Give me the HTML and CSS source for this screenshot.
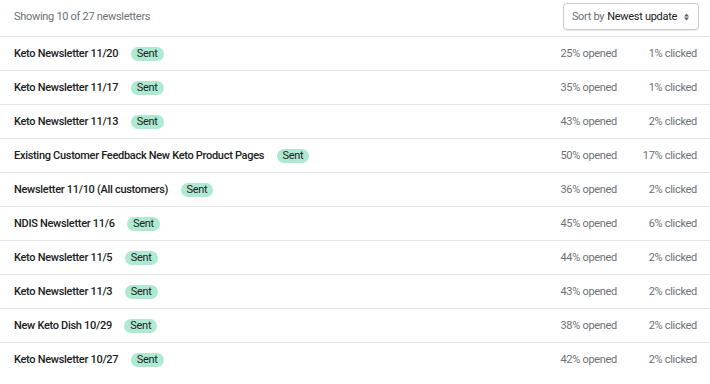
FILE: index.html
```html
<!DOCTYPE html>
<html lang="en">
<head>
    <meta charset="UTF-8">
    <title>Newsletters</title>
    <link rel="stylesheet" href="styles.css">
</head>
<body>
    <div class="list">
        <div class="list-header">
            <span class="count">Showing 10 of 27 newsletters</span>
            <button class="sort-btn">Sort by <span class="sort-value">Newest update</span>
                <svg class="caret" width="7" height="10" viewBox="0 0 7 10"><path d="M3.5 1.5L6 4.5H1z M3.5 8.5L1 5.5h5z" fill="#5c5f62"/></svg>
            </button>
        </div>

        <div class="row">
            <div class="name">Keto Newsletter 11/20 <span class="badge">Sent</span></div>
            <div class="stat">25% opened</div>
            <div class="stat">1% clicked</div>
        </div>
        <div class="row">
            <div class="name">Keto Newsletter 11/17 <span class="badge">Sent</span></div>
            <div class="stat">35% opened</div>
            <div class="stat">1% clicked</div>
        </div>
        <div class="row">
            <div class="name">Keto Newsletter 11/13 <span class="badge">Sent</span></div>
            <div class="stat">43% opened</div>
            <div class="stat">2% clicked</div>
        </div>
        <div class="row">
            <div class="name">Existing Customer Feedback New Keto Product Pages <span class="badge">Sent</span></div>
            <div class="stat">50% opened</div>
            <div class="stat">17% clicked</div>
        </div>
        <div class="row">
            <div class="name">Newsletter 11/10 (All customers) <span class="badge">Sent</span></div>
            <div class="stat">36% opened</div>
            <div class="stat">2% clicked</div>
        </div>
        <div class="row">
            <div class="name">NDIS Newsletter 11/6 <span class="badge">Sent</span></div>
            <div class="stat">45% opened</div>
            <div class="stat">6% clicked</div>
        </div>
        <div class="row">
            <div class="name">Keto Newsletter 11/5 <span class="badge">Sent</span></div>
            <div class="stat">44% opened</div>
            <div class="stat">2% clicked</div>
        </div>
        <div class="row">
            <div class="name">Keto Newsletter 11/3 <span class="badge">Sent</span></div>
            <div class="stat">43% opened</div>
            <div class="stat">2% clicked</div>
        </div>
        <div class="row">
            <div class="name">New Keto Dish 10/29 <span class="badge">Sent</span></div>
            <div class="stat">38% opened</div>
            <div class="stat">2% clicked</div>
        </div>
        <div class="row">
            <div class="name">Keto Newsletter 10/27 <span class="badge">Sent</span></div>
            <div class="stat">42% opened</div>
            <div class="stat">2% clicked</div>
        </div>
    </div>
</body>
</html>
```

FILE: styles.css
```css
body {
    margin: 0;
    background: #fff;
    font-family: Roboto, "Noto Sans", sans-serif;
    font-size: 11px;
    letter-spacing: -0.3px;
    color: #202223;
}

.list {
    width: 710px;
}

.list-header {
    display: flex;
    align-items: center;
    justify-content: space-between;
    height: 33px;
    padding: 0 11px 3px 14px;
    border-bottom: 1px solid #e4e5e7;
}

.count {
    color: #6d7175;
}

.sort-btn {
    display: flex;
    align-items: center;
    gap: 6px;
    height: 27px;
    padding: 0 8px;
    background: #fff;
    border: 1px solid #c9cccf;
    border-radius: 4px;
    box-shadow: 0 1px 1px rgba(0,0,0,0.08);
    font-family: inherit;
    font-size: 11px;
    letter-spacing: -0.3px;
    color: #6d7175;
}

.sort-value {
    margin-left: -3px;
    color: #202223;
}

.row {
    display: flex;
    align-items: center;
    height: 33px;
    padding: 0 13px 0 14px;
    border-bottom: 1px solid #e4e5e7;
}

.row:last-child {
    border-bottom: none;
}

.name {
    flex: 1;
    font-weight: 500;
}

.badge {
    display: inline-block;
    margin-left: 10px;
    padding: 0 6px;
    line-height: 14px;
    border-radius: 7px;
    background: #aee9d1;
    color: #202223;
    font-size: 11px;
    font-weight: 400;
}

.stat {
    width: 80px;
    text-align: right;
    color: #6d7175;
}
```
